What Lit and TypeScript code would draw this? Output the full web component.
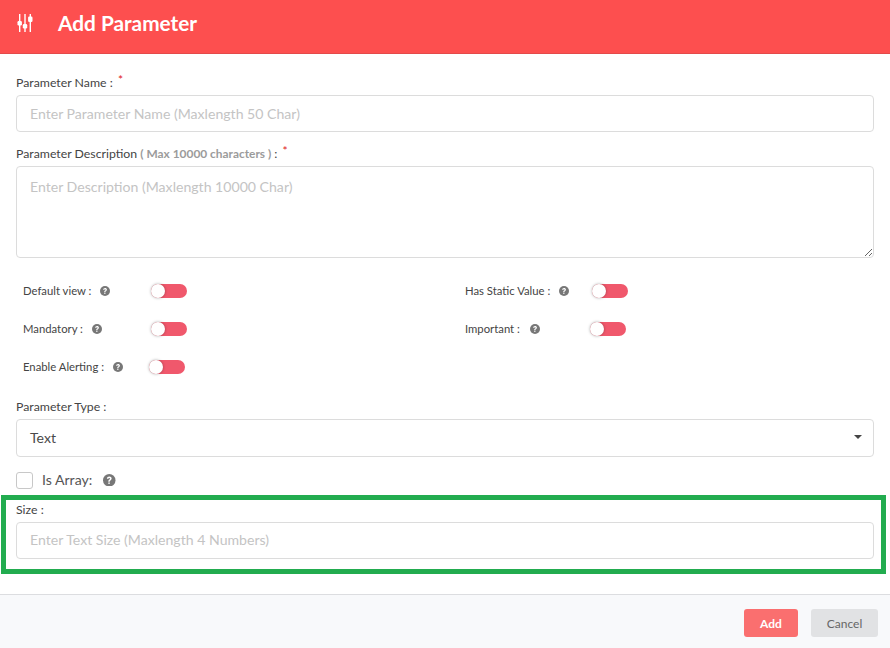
import { LitElement, html, css, svg } from "lit";
import { customElement } from "lit/decorators.js";

const help = html`<svg class="help" viewBox="0 0 24 24" aria-hidden="true"><circle cx="12" cy="12" r="12" fill="currentColor"/><path d="M7.500 9.200C7.700 6.700 9.500 5 12.100 5c2.700 0 4.500 1.600 4.500 3.800 0 1.700-.9 2.700-2.300 3.500-1 .6-1.300 1-1.300 2v.6h-2.800v-.9c0-1.600.6-2.500 1.900-3.300 1-.6 1.400-1.100 1.400-1.800 0-.8-.6-1.300-1.500-1.300-1 0-1.600.6-1.700 1.600Z" fill="#fff"/><rect x="10.200" y="16.200" width="2.800" height="2.800" fill="#fff"/></svg>`;

const icon = svg`<svg class="logo" viewBox="0 0 16 18" aria-hidden="true" fill="#fff">
  <rect x="2" y="0" width="1.400" height="18"/><rect x="7.300" y="0" width="1.400" height="18"/><rect x="12.600" y="0" width="1.400" height="18"/>
  <rect x="0.500" y="7" width="4.400" height="4.500" rx="1.200"/><rect x="5.800" y="10" width="4.400" height="4.500" rx="1.200"/><rect x="11.100" y="2.500" width="4.400" height="5.500" rx="1.200"/>
</svg>`;

@customElement("app-root")
export class AppRoot extends LitElement {
  static styles = css`
    :host { display: block; width: 890px; height: 648px; background: #fff; font-family: Lato, "Open Sans", sans-serif; color: #4a4a4a; overflow: hidden; }
    * { box-sizing: border-box; }
    .page { display: flex; flex-direction: column; height: 648px; }
    .head { height: 54px; flex: none; background: #fd4f4f; border-bottom: 1px solid #e34a4a; display: flex; align-items: center; color: #fff; padding: 0 0 8px 17px; gap: 25px; }
    .logo { width: 16px; height: 18px; display: block; }
    .head h1 { margin: 0; font-size: 20.800px; font-weight: 700; line-height: 24px; }
    .body { flex: 1; padding: 21px 16px 0; display: flex; flex-direction: column; }
    .label { font-size: 12.300px; line-height: 16px; height: 16px; color: #444; font-weight: 400; margin-bottom: 4px; white-space: nowrap; }
    .label .note { color: #9b9b9b; font-weight: 700; font-size: 11.900px; }
    .req { color: #e01919; font-size: 12px; position: relative; top: -3px; margin-left: 2px; }
    .input, .area, .select { width: 858px; border: 1px solid #dcdcdc; border-radius: 4px; background: #fff; font: 400 14.100px Lato, sans-serif; color: #4a4a4a; padding: 0 13px; display: block; outline: none; }
    .input { height: 37px; }
    .input::placeholder, .area::placeholder { color: #c4c4c4; opacity: 1; }
    .area { height: 92px; padding-top: 11px; resize: vertical; margin: 0; }
    .gap { height: 14px; flex: none; }
    .toggles { display: grid; grid-template-columns: 442px 1fr; align-content: start; row-gap: 24px; padding: 26px 0 0 7px; height: 141px; }
    .item { display: flex; align-items: center; height: 14px; font-size: 11.300px; color: #444; white-space: nowrap; }
    .item .name { padding-bottom: 2px; }
    .help { width: 10px; height: 10px; color: #777; flex: none; margin-left: 9px; display: block; }
    .item.wide .help { margin-left: 10px; }
    .sw { width: 36px; height: 14px; background: #f0586c; border-radius: 7px; position: relative; flex: none; }
    .sw::before { content: ""; position: absolute; left: 0; top: 0; width: 14px; height: 14px; border-radius: 50%; background: #fff; box-shadow: 0 0 3px rgba(0,0,0,.35); }
    .selectwrap { position: relative; }
    .select { height: 38px; display: flex; align-items: center; padding-bottom: 2px; }
    .caret { position: absolute; right: 12px; top: 16px; width: 0; height: 0; border: 4px solid transparent; border-top-color: #444; border-bottom: 0; }
    .array { display: flex; align-items: center; height: 18px; margin-top: 14px; font-size: 14.100px; color: #555; }
    .array .name { padding-bottom: 2px; }
    .box { width: 17px; height: 17px; border: 1px solid #c8c8c8; border-radius: 3px; flex: none; margin-right: 9px; }
    .array .help { width: 12.500px; height: 12.500px; margin-left: 11px; }
    .green { margin: 6px -15px 0; width: 885px; height: 79px; border: 5px solid #22ac4f; padding: 2px 10px 0; }
    .green .input { padding-bottom: 2px; }
    .foot { height: 54px; flex: none; background: #f8f9fb; border-top: 1px solid #dcdde0; display: flex; justify-content: flex-end; align-items: flex-start; gap: 13px; padding: 14px 12px 0 0; }
    button { height: 28px; border: 0; border-radius: 3px; font: 12px Lato, sans-serif; padding: 0; }
    .add { width: 54px; background: #fa6f6f; color: #fff; font-weight: 700; }
    .cancel { width: 67px; background: #e1e2e4; color: #666; }
  `;

  private toggle(label: string, gap: number, wide = false) {
    return html`<div class="item ${wide ? "wide" : ""}"><span class="name">${label}</span>${help}<span class="sw" style="margin-left:${gap}px"></span></div>`;
  }

  render() {
    return html`<div class="page">
      <header class="head">${icon}<h1>Add Parameter</h1></header>
      <main class="body">
        <div class="label">Parameter Name : <span class="req">*</span></div>
        <input class="input" placeholder="Enter Parameter Name (Maxlength 50 Char)" />
        <div class="gap"></div>
        <div class="label">Parameter Description <span class="note">( Max 10000 characters )</span> : <span class="req">*</span></div>
        <textarea class="area" placeholder="Enter Description (Maxlength 10000 Char)"></textarea>
        <div class="toggles">
          ${this.toggle("Default view :", 40.5)}
          ${this.toggle("Has Static Value :", 22.5)}
          ${this.toggle("Mandatory :", 49.5)}
          ${this.toggle("Important :", 50.5, true)}
          ${this.toggle("Enable Alerting :", 26.5)}
        </div>
        <div class="label">Parameter Type :</div>
        <div class="selectwrap"><div class="select">Text</div><span class="caret"></span></div>
        <div class="array"><span class="box"></span><span class="name">Is Array:</span>${help}</div>
        <section class="green">
          <div class="label">Size :</div>
          <input class="input" placeholder="Enter Text Size (Maxlength 4 Numbers)" />
        </section>
      </main>
      <footer class="foot"><button class="add">Add</button><button class="cancel">Cancel</button></footer>
    </div>`;
  }
}
